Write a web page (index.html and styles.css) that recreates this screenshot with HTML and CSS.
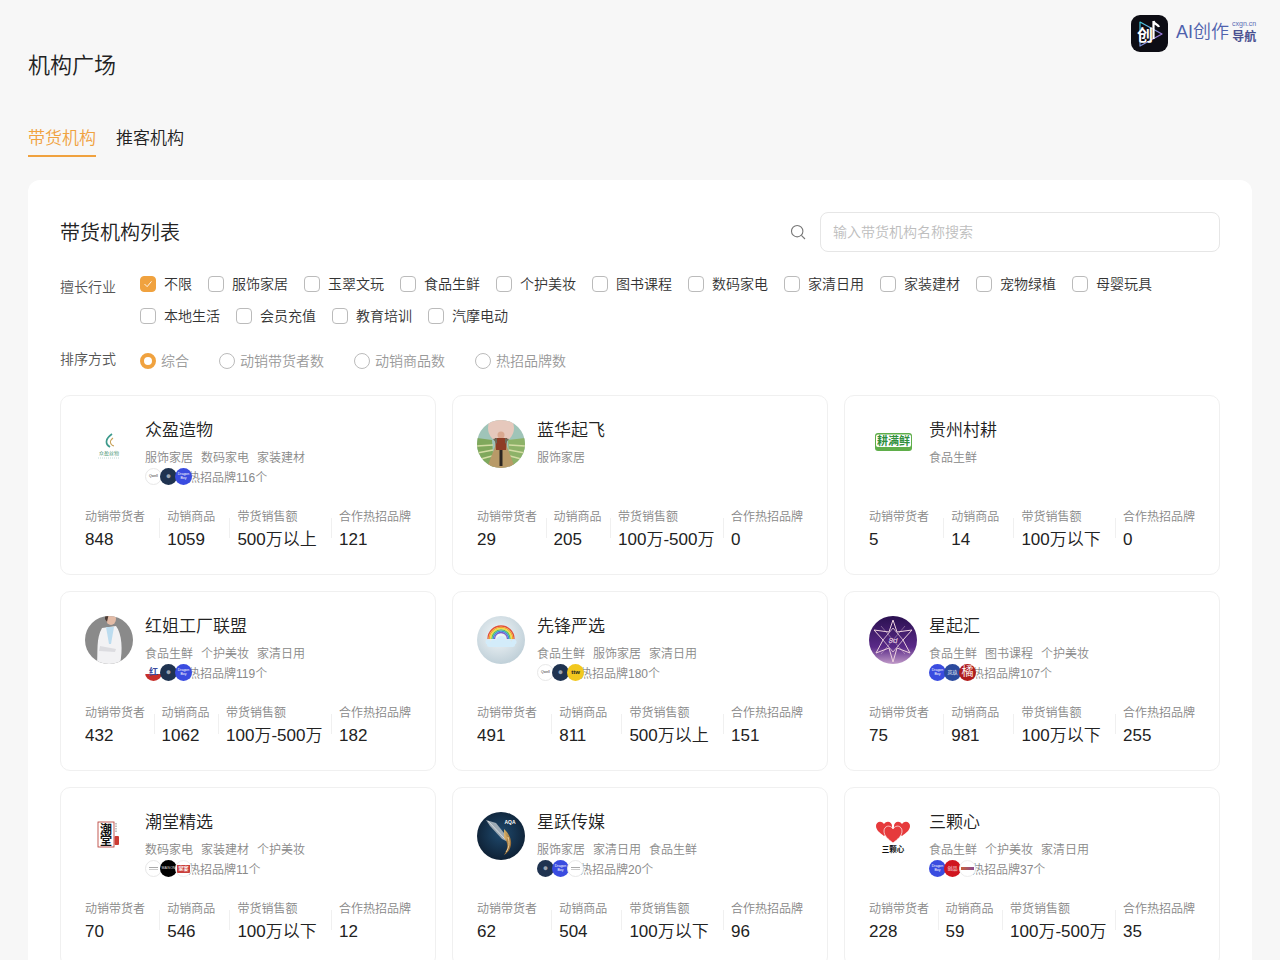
FILE: index.html
```html
<!DOCTYPE html>
<html lang="zh-CN">
<head>
<meta charset="UTF-8">
<meta name="viewport" content="width=device-width, initial-scale=1.0">
<title>机构广场</title>
<link rel="stylesheet" href="styles.css">
</head>
<body>
<div class="site-logo">
  <svg class="site-logo-icon" viewBox="0 0 37 37">
    <defs>
      <linearGradient id="playGrad" x1="0" y1="0" x2="1" y2="1">
        <stop offset="0" stop-color="#3fd0e0"/>
        <stop offset="1" stop-color="#c05fe0"/>
      </linearGradient>
    </defs>
    <rect width="37" height="37" rx="9" fill="#0d0d14"/>
    <path d="M9 7 L31 19 L9 31 Z" fill="none" stroke="url(#playGrad)" stroke-width="1.2" stroke-linejoin="round"/>
    <text x="6" y="26" class="site-logo-glyph">创</text>
    <path d="M22.500 6 V24 M22.500 6 C23.500 10 27 9 28 12" fill="none" stroke="#fff" stroke-width="2.200"/>
  </svg>
  <span class="site-logo-name">AI创作</span>
  <span class="site-logo-side">
    <span class="site-logo-domain">cxgn.cn</span>
    <span class="site-logo-nav">导航</span>
  </span>
</div>

<h1 class="page-title">机构广场</h1>

<div class="tabs">
  <div class="tab active">带货机构</div>
  <div class="tab">推客机构</div>
</div>

<div class="panel">
  <div class="panel-head">
    <h2 class="panel-title">带货机构列表</h2>
    <div class="search">
      <svg class="search-icon" viewBox="0 0 16 16"><circle cx="7.2" cy="7.2" r="5.7"/><path d="M11.4 11.4 L15 15"/></svg>
      <input class="search-input" type="text" placeholder="输入带货机构名称搜索">
    </div>
  </div>

  <div class="filter">
    <div class="filter-label">擅长行业</div>
    <div class="options">
      <label class="option"><span class="check checked"><svg viewBox="0 0 16 16"><path d="M4 8 L7 11 L12 5"/></svg></span>不限</label>
      <label class="option"><span class="check"></span>服饰家居</label>
      <label class="option"><span class="check"></span>玉翠文玩</label>
      <label class="option"><span class="check"></span>食品生鲜</label>
      <label class="option"><span class="check"></span>个护美妆</label>
      <label class="option"><span class="check"></span>图书课程</label>
      <label class="option"><span class="check"></span>数码家电</label>
      <label class="option"><span class="check"></span>家清日用</label>
      <label class="option"><span class="check"></span>家装建材</label>
      <label class="option"><span class="check"></span>宠物绿植</label>
      <label class="option"><span class="check"></span>母婴玩具</label>
      <label class="option"><span class="check"></span>本地生活</label>
      <label class="option"><span class="check"></span>会员充值</label>
      <label class="option"><span class="check"></span>教育培训</label>
      <label class="option"><span class="check"></span>汽摩电动</label>
    </div>
  </div>

  <div class="filter sort">
    <div class="filter-label">排序方式</div>
    <div class="radios">
      <label class="radio-item"><span class="radio checked"></span>综合</label>
      <label class="radio-item"><span class="radio"></span>动销带货者数</label>
      <label class="radio-item"><span class="radio"></span>动销商品数</label>
      <label class="radio-item"><span class="radio"></span>热招品牌数</label>
    </div>
  </div>

  <div class="card-grid">

    <div class="card">
      <div class="card-head">
        <div class="avatar">
          <svg viewBox="0 0 48 48">
            <rect width="48" height="48" fill="#fff"/>
            <path d="M27 14 C20 19 20 24 25 27" fill="none" stroke="#3d9a8c" stroke-width="1.700"/>
            <path d="M28 18 C24 21 25 25 29 26" fill="none" stroke="#c9a25a" stroke-width="1.100"/>
            <text x="24" y="35" class="av-tiny av-green">众盈丝物</text>
            <path d="M13 38 H35" stroke="#7cb5a8" stroke-width=".5" stroke-dasharray="1 1"/>
          </svg>
        </div>
        <div class="card-info">
          <div class="card-name">众盈造物</div>
          <div class="card-tags"><span>服饰家居</span><span>数码家电</span><span>家装建材</span></div>
          <div class="card-brands">
            <div class="brand-icons"><span class="brand b-white">Qwell</span><span class="brand b-navy">●</span><span class="brand b-blue">Dragon<br>Boy</span></div>
            <span class="brand-count">热招品牌116个</span>
          </div>
        </div>
      </div>
      <div class="stats">
        <div class="stat"><div class="stat-label">动销带货者</div><div class="stat-value">848</div></div>
        <div class="stat"><div class="stat-label">动销商品</div><div class="stat-value">1059</div></div>
        <div class="stat"><div class="stat-label">带货销售额</div><div class="stat-value">500万以上</div></div>
        <div class="stat"><div class="stat-label">合作热招品牌</div><div class="stat-value">121</div></div>
      </div>
    </div>

    <div class="card">
      <div class="card-head">
        <div class="avatar">
          <svg viewBox="0 0 48 48">
            <rect width="48" height="48" fill="#9fc4b8"/>
            <path d="M0 18 L15 20 L17 48 H0 Z" fill="#7fa85c"/>
            <path d="M48 18 L31 20 L33 48 H48 Z" fill="#8db268"/>
            <path d="M0 26 L16 25 M0 33 L16 30 M0 40 L15 36 M48 26 L32 25 M48 33 L32 30 M48 40 L33 36" stroke="#d3dca4" stroke-width="1.300"/>
            <path d="M19 24 H29 L38 48 H10 Z" fill="#b89a68"/>
            <ellipse cx="24" cy="8" rx="13" ry="14" fill="#e6c8bc"/>
            <circle cx="24" cy="15" r="3.500" fill="#d9a890"/>
            <path d="M18 18 H30 L29 30 H19 Z" fill="#8e3d26"/>
            <path d="M16 19 L20 18 L20 24 Z M32 19 L28 18 L28 24 Z" fill="#6e6a58"/>
            <path d="M22.500 30 H25.500 L25.500 46 H22.500 Z" fill="#2b2622"/>
          </svg>
        </div>
        <div class="card-info">
          <div class="card-name">蓝华起飞</div>
          <div class="card-tags"><span>服饰家居</span></div>
        </div>
      </div>
      <div class="stats">
        <div class="stat"><div class="stat-label">动销带货者</div><div class="stat-value">29</div></div>
        <div class="stat"><div class="stat-label">动销商品</div><div class="stat-value">205</div></div>
        <div class="stat"><div class="stat-label">带货销售额</div><div class="stat-value">100万-500万</div></div>
        <div class="stat"><div class="stat-label">合作热招品牌</div><div class="stat-value">0</div></div>
      </div>
    </div>

    <div class="card">
      <div class="card-head">
        <div class="avatar">
          <svg viewBox="0 0 48 48">
            <rect width="48" height="48" fill="#fff"/>
            <rect x="6" y="13" width="37" height="18" rx="3" fill="#5fae4a"/>
            <rect x="7" y="14.500" width="35" height="12.500" rx="2" fill="#fff"/>
            <text x="24.5" y="25" class="av-fresh">耕满鲜</text>
          </svg>
        </div>
        <div class="card-info">
          <div class="card-name">贵州村耕</div>
          <div class="card-tags"><span>食品生鲜</span></div>
        </div>
      </div>
      <div class="stats">
        <div class="stat"><div class="stat-label">动销带货者</div><div class="stat-value">5</div></div>
        <div class="stat"><div class="stat-label">动销商品</div><div class="stat-value">14</div></div>
        <div class="stat"><div class="stat-label">带货销售额</div><div class="stat-value">100万以下</div></div>
        <div class="stat"><div class="stat-label">合作热招品牌</div><div class="stat-value">0</div></div>
      </div>
    </div>

    <div class="card">
      <div class="card-head">
        <div class="avatar">
          <svg viewBox="0 0 48 48">
            <rect width="48" height="48" fill="#8a8a8a"/>
            <path d="M17 12 L31 10 C37 18 38 34 35 48 H12 C13 36 11 22 17 12 Z" fill="#f2f2f4"/>
            <path d="M21 11 H29 L26 28 H24 Z" fill="#bcdcef"/>
            <path d="M15 30 L31 33 L30 36 L14 35 Z" fill="#dcdce0"/>
            <ellipse cx="26" cy="3" rx="5" ry="6" fill="#e3bba6"/>
            <path d="M20 3 C20 -2 22 -3 24 -3 L22 6 Z" fill="#4a3a34"/>
          </svg>
        </div>
        <div class="card-info">
          <div class="card-name">红姐工厂联盟</div>
          <div class="card-tags"><span>食品生鲜</span><span>个护美妆</span><span>家清日用</span></div>
          <div class="card-brands">
            <div class="brand-icons"><span class="brand b-mix">红</span><span class="brand b-navy">●</span><span class="brand b-blue">Dragon<br>Boy</span></div>
            <span class="brand-count">热招品牌119个</span>
          </div>
        </div>
      </div>
      <div class="stats">
        <div class="stat"><div class="stat-label">动销带货者</div><div class="stat-value">432</div></div>
        <div class="stat"><div class="stat-label">动销商品</div><div class="stat-value">1062</div></div>
        <div class="stat"><div class="stat-label">带货销售额</div><div class="stat-value">100万-500万</div></div>
        <div class="stat"><div class="stat-label">合作热招品牌</div><div class="stat-value">182</div></div>
      </div>
    </div>

    <div class="card">
      <div class="card-head">
        <div class="avatar">
          <svg viewBox="0 0 48 48">
            <defs>
              <radialGradient id="skyGrad" cx=".45" cy=".4" r=".65">
                <stop offset="0" stop-color="#f4f8fa"/>
                <stop offset="1" stop-color="#bccdd6"/>
              </radialGradient>
            </defs>
            <rect width="48" height="48" fill="url(#skyGrad)"/>
            <g fill="none" stroke-width="1.300">
              <path d="M11 23 A13 13 0 0 1 37 23" stroke="#e4503a"/>
              <path d="M12.300 23 A11.700 11.700 0 0 1 35.700 23" stroke="#f2a02c"/>
              <path d="M13.600 23 A10.400 10.400 0 0 1 34.400 23" stroke="#f3dc3c"/>
              <path d="M14.900 23 A9.100 9.100 0 0 1 33.100 23" stroke="#5cc35a"/>
              <path d="M16.200 23 A7.800 7.800 0 0 1 31.800 23" stroke="#3a96dc"/>
              <path d="M17.500 23 A6.500 6.500 0 0 1 30.500 23" stroke="#7a5cc8"/>
            </g>
            <g fill="#d3ecfa">
              <circle cx="24" cy="25" r="5"/>
              <circle cx="17" cy="27" r="3.500"/>
              <circle cx="31" cy="27" r="3.500"/>
              <circle cx="11" cy="26" r="2.500"/>
              <circle cx="37" cy="26" r="2.500"/>
              <rect x="10" y="26" width="28" height="5" rx="2.500"/>
            </g>
          </svg>
        </div>
        <div class="card-info">
          <div class="card-name">先锋严选</div>
          <div class="card-tags"><span>食品生鲜</span><span>服饰家居</span><span>家清日用</span></div>
          <div class="card-brands">
            <div class="brand-icons"><span class="brand b-white">Qwell</span><span class="brand b-navy">●</span><span class="brand b-yellow">ttw</span></div>
            <span class="brand-count">热招品牌180个</span>
          </div>
        </div>
      </div>
      <div class="stats">
        <div class="stat"><div class="stat-label">动销带货者</div><div class="stat-value">491</div></div>
        <div class="stat"><div class="stat-label">动销商品</div><div class="stat-value">811</div></div>
        <div class="stat"><div class="stat-label">带货销售额</div><div class="stat-value">500万以上</div></div>
        <div class="stat"><div class="stat-label">合作热招品牌</div><div class="stat-value">151</div></div>
      </div>
    </div>

    <div class="card">
      <div class="card-head">
        <div class="avatar">
          <svg viewBox="0 0 48 48">
            <defs>
              <linearGradient id="starGrad" x1="0" y1="0" x2="0" y2="1">
                <stop offset="0" stop-color="#2a1050"/>
                <stop offset=".65" stop-color="#5a2a88"/>
                <stop offset="1" stop-color="#c09ac8"/>
              </linearGradient>
            </defs>
            <rect width="48" height="48" fill="url(#starGrad)"/>
            <path d="M24 4 L28 16 L43 14 L34 24 L41 37 L28 32 L24 46 L20 32 L7 37 L14 24 L5 14 L20 16 Z" fill="none" stroke="#eed3de" stroke-width="1"/>
            <path d="M24 12 L34 24 L24 36 L14 24 Z" fill="none" stroke="#eed3de" stroke-width=".8"/>
            <path d="M12 10 L36 38 M36 10 L12 38" stroke="#eed3de" stroke-width=".4"/>
            <text x="24" y="27" class="av-star">8d</text>
          </svg>
        </div>
        <div class="card-info">
          <div class="card-name">星起汇</div>
          <div class="card-tags"><span>食品生鲜</span><span>图书课程</span><span>个护美妆</span></div>
          <div class="card-brands">
            <div class="brand-icons"><span class="brand b-blue">Dragon<br>Boy</span><span class="brand b-indigo">岚玖</span><span class="brand b-red">橘</span></div>
            <span class="brand-count">热招品牌107个</span>
          </div>
        </div>
      </div>
      <div class="stats">
        <div class="stat"><div class="stat-label">动销带货者</div><div class="stat-value">75</div></div>
        <div class="stat"><div class="stat-label">动销商品</div><div class="stat-value">981</div></div>
        <div class="stat"><div class="stat-label">带货销售额</div><div class="stat-value">100万以下</div></div>
        <div class="stat"><div class="stat-label">合作热招品牌</div><div class="stat-value">255</div></div>
      </div>
    </div>

    <div class="card">
      <div class="card-head">
        <div class="avatar">
          <svg viewBox="0 0 48 48">
            <rect width="48" height="48" fill="#fff"/>
            <rect x="13" y="10" width="16" height="25" fill="none" stroke="#b5342c" stroke-width=".8"/>
            <text x="21" y="21.500" class="av-chao">潮</text>
            <text x="21" y="33" class="av-chao">堂</text>
            <rect x="29.500" y="24" width="4.500" height="9" rx="1" fill="#cc3b33"/>
            <path d="M31 11 V21" stroke="#c4c4c4" stroke-width="2" stroke-dasharray="1.500 1"/>
          </svg>
        </div>
        <div class="card-info">
          <div class="card-name">潮堂精选</div>
          <div class="card-tags"><span>数码家电</span><span>家装建材</span><span>个护美妆</span></div>
          <div class="card-brands">
            <div class="brand-icons"><span class="brand b-lines"></span><span class="brand b-black">MAISON</span><span class="brand b-stamp">家宴</span></div>
            <span class="brand-count">热招品牌11个</span>
          </div>
        </div>
      </div>
      <div class="stats">
        <div class="stat"><div class="stat-label">动销带货者</div><div class="stat-value">70</div></div>
        <div class="stat"><div class="stat-label">动销商品</div><div class="stat-value">546</div></div>
        <div class="stat"><div class="stat-label">带货销售额</div><div class="stat-value">100万以下</div></div>
        <div class="stat"><div class="stat-label">合作热招品牌</div><div class="stat-value">12</div></div>
      </div>
    </div>

    <div class="card">
      <div class="card-head">
        <div class="avatar">
          <svg viewBox="0 0 48 48">
            <defs>
              <radialGradient id="nightGrad" cx=".5" cy=".45" r=".7">
                <stop offset="0" stop-color="#1f4a6e"/>
                <stop offset="1" stop-color="#0a1626"/>
              </radialGradient>
              <linearGradient id="tailGrad" x1="0" y1="0" x2="1" y2="1">
                <stop offset="0" stop-color="#f4c36a"/>
                <stop offset="1" stop-color="#9a5f20"/>
              </linearGradient>
            </defs>
            <rect width="48" height="48" fill="url(#nightGrad)"/>
            <path d="M9 8 L19 11 L31 26 L29 29 L25 27 L13 14 Z" fill="#9eabb5"/>
            <path d="M11 9 L28 27" stroke="#eef1f3" stroke-width=".7"/>
            <path d="M27 17 C37 26 36 38 27 43 C31 37 32 31 27 26 Z" fill="url(#tailGrad)" opacity=".85"/>
            <path d="M31 25 C33 31 32 36 29 40" stroke="#ffe6b0" stroke-width=".8" fill="none"/>
            <text x="33" y="12" class="av-tiny av-white">AQA</text>
          </svg>
        </div>
        <div class="card-info">
          <div class="card-name">星跃传媒</div>
          <div class="card-tags"><span>服饰家居</span><span>家清日用</span><span>食品生鲜</span></div>
          <div class="card-brands">
            <div class="brand-icons"><span class="brand b-navy">●</span><span class="brand b-blue">Dragon<br>Boy</span><span class="brand b-lines"></span></div>
            <span class="brand-count">热招品牌20个</span>
          </div>
        </div>
      </div>
      <div class="stats">
        <div class="stat"><div class="stat-label">动销带货者</div><div class="stat-value">62</div></div>
        <div class="stat"><div class="stat-label">动销商品</div><div class="stat-value">504</div></div>
        <div class="stat"><div class="stat-label">带货销售额</div><div class="stat-value">100万以下</div></div>
        <div class="stat"><div class="stat-label">合作热招品牌</div><div class="stat-value">96</div></div>
      </div>
    </div>

    <div class="card">
      <div class="card-head">
        <div class="avatar">
          <svg viewBox="0 0 48 48">
            <rect width="48" height="48" fill="#fff"/>
            <path d="M15 24 C11 21 7 18 7 14 C7 10 12 8 15 12 C18 8 23 10 23 14 C23 18 19 21 15 24 Z" fill="#e63a3c"/>
            <path d="M33 24 C29 21 25 18 25 14 C25 10 30 8 33 12 C36 8 41 10 41 14 C41 18 37 21 33 24 Z" fill="#e63a3c"/>
            <path d="M24 31 C19 27 15 24 15 19 C15 14 21 12 24 17 C27 12 33 14 33 19 C33 24 29 27 24 31 Z" fill="#e63a3c" stroke="#fff" stroke-width=".7"/>
            <text x="24" y="39.500" class="av-heart">三颗心</text>
          </svg>
        </div>
        <div class="card-info">
          <div class="card-name">三颗心</div>
          <div class="card-tags"><span>食品生鲜</span><span>个护美妆</span><span>家清日用</span></div>
          <div class="card-brands">
            <div class="brand-icons"><span class="brand b-blue">Dragon<br>Boy</span><span class="brand b-crimson">创品</span><span class="brand b-bar"></span></div>
            <span class="brand-count">热招品牌37个</span>
          </div>
        </div>
      </div>
      <div class="stats">
        <div class="stat"><div class="stat-label">动销带货者</div><div class="stat-value">228</div></div>
        <div class="stat"><div class="stat-label">动销商品</div><div class="stat-value">59</div></div>
        <div class="stat"><div class="stat-label">带货销售额</div><div class="stat-value">100万-500万</div></div>
        <div class="stat"><div class="stat-label">合作热招品牌</div><div class="stat-value">35</div></div>
      </div>
    </div>

  </div>
</div>
</body>
</html>
```

FILE: styles.css
```css
* {
  box-sizing: border-box;
}
html, body {
  height: 100%;
}
body {
  margin: 0;
  padding: 51px 28px 0;
  overflow: hidden;
  background: #f7f7f7;
  color: #222;
  font-family: "Liberation Sans", "Noto Sans CJK SC", sans-serif;
  font-weight: 350;
}
h1, h2 {
  margin: 0;
  font-weight: 350;
}

/* site logo, floats over the page corner */
.site-logo {
  position: absolute;
  top: 15px;
  left: 1131px;
  display: flex;
  align-items: center;
  gap: 8px;
}
.site-logo-icon {
  width: 37px;
  height: 37px;
}
.site-logo-glyph {
  font-size: 16px;
  font-weight: 700;
  fill: #fff;
}
.site-logo-name {
  font-size: 18px;
  line-height: 30px;
  color: #4f62ad;
  margin-top: -4px;
}
.site-logo-side {
  display: flex;
  flex-direction: column;
  align-items: flex-end;
  margin-left: -5px;
  margin-top: -4px;
}
.site-logo-domain {
  font-size: 7px;
  line-height: 8px;
  color: #5a6bb5;
}
.site-logo-nav {
  margin-top: 3px;
  font-size: 12px;
  line-height: 13px;
  font-weight: 700;
  color: #4a5090;
}

.page-title {
  font-size: 22px;
  line-height: 30px;
}

.tabs {
  display: flex;
  gap: 20px;
  margin-top: 46px;
}
.tab {
  font-size: 17px;
  line-height: 24px;
  padding-bottom: 4px;
  border-bottom: 2px solid transparent;
}
.tab.active {
  color: #f0a23f;
  border-bottom-color: #f0a23f;
}

.panel {
  margin-top: 23px;
  padding: 32px;
  background: #fff;
  border-radius: 12px;
}
.panel-head {
  display: flex;
  align-items: center;
  justify-content: space-between;
}
.panel-title {
  padding-top: 2px;
  font-size: 20px;
  line-height: 28px;
}
.search {
  display: flex;
  align-items: center;
  gap: 14px;
}
.search-icon {
  width: 16px;
  height: 16px;
  fill: none;
  stroke: #777;
  stroke-width: 1.1;
}
.search-input {
  width: 400px;
  height: 40px;
  padding: 0 12px;
  border: 1px solid #e6e6e6;
  border-radius: 8px;
  outline: none;
  font-family: inherit;
  font-size: 14px;
  font-weight: 350;
}
.search-input::placeholder {
  color: #bdbdbd;
}

.filter {
  display: flex;
  margin-top: 22px;
}
.filter-label {
  flex: none;
  width: 80px;
  padding-top: 3px;
  font-size: 14px;
  line-height: 20px;
  color: #555;
}
.options {
  display: flex;
  flex-wrap: wrap;
  gap: 12px 16px;
}
.option {
  display: flex;
  align-items: center;
  gap: 8px;
  font-size: 14px;
  line-height: 20px;
  color: #333;
}
.check {
  width: 16px;
  height: 16px;
  border: 1px solid #bbb;
  border-radius: 4px;
  background: #fff;
}
.check.checked {
  border-color: #f0a23f;
  background: #f0a23f;
}
.check svg {
  display: block;
  width: 14px;
  height: 14px;
  fill: none;
  stroke: #fff;
  stroke-width: 1;
}

.sort {
  margin-top: 23px;
}
.sort .filter-label {
  padding-top: 0;
}
.radios {
  display: flex;
  gap: 30px;
  padding-top: 2px;
}
.radio-item {
  display: flex;
  align-items: center;
  gap: 5px;
  font-size: 14px;
  line-height: 20px;
  color: #999;
}
.radio {
  width: 16px;
  height: 16px;
  border: 1px solid #bbb;
  border-radius: 50%;
  background: #fff;
}
.radio.checked {
  border: 4px solid #f0a23f;
}

.card-grid {
  display: grid;
  grid-template-columns: repeat(3, 1fr);
  gap: 16.200px 16px;
  margin-top: 24px;
}
.card {
  padding: 24px 24px 23px;
  border: 1px solid #f0f0f0;
  border-radius: 10px;
  background: #fff;
}
.card-head {
  display: flex;
  gap: 12px;
  height: 68px;
}
.avatar {
  flex: none;
  width: 48px;
  height: 48px;
  border-radius: 50%;
  overflow: hidden;
}
.avatar svg {
  display: block;
  width: 48px;
  height: 48px;
}
.card-name {
  padding-top: 1px;
  font-size: 17px;
  line-height: 20px;
}
.card-tags {
  display: flex;
  gap: 8px;
  margin-top: 9px;
  font-size: 12px;
  line-height: 17px;
  color: #888;
}
.card-brands {
  display: flex;
  align-items: center;
  margin-top: 1px;
  height: 17px;
}
.brand-icons {
  display: flex;
  position: relative;
  z-index: 1;
}
.brand {
  display: flex;
  align-items: center;
  justify-content: center;
  flex: none;
  width: 17px;
  height: 17px;
  margin-left: -2px;
  border-radius: 50%;
  overflow: hidden;
  font-size: 3.500px;
  line-height: 3.500px;
  text-align: center;
}
.brand:first-child {
  margin-left: 0;
}
.brand-count {
  margin-left: -4px;
  font-size: 12px;
  color: #888;
}
.b-white {
  background: #fff;
  border: 1px solid #e8e8e8;
  color: #333;
}
.b-lines {
  background: #fff linear-gradient(transparent 40%, #aaa 40%, #aaa 48%, transparent 48%, transparent 54%, #ccc 54%, #ccc 60%, transparent 60%) center / 9px 100% no-repeat;
  border: 1px solid #e8e8e8;
}
.b-navy {
  background: #1f3350;
  color: #9aa4b0;
  font-size: 9px;
}
.b-blue {
  background: #3a4ce0;
  color: #fff;
}
.b-yellow {
  background: #f2c81e;
  color: #222;
  font-size: 6px;
  font-weight: 700;
}
.b-mix {
  background: linear-gradient(#fff 60%, #c62f2a 60%);
  color: #3a4a9e;
  font-size: 9px;
  font-weight: 700;
}
.b-indigo {
  background: #2b4a9e;
  color: #fff;
  font-size: 5px;
}
.b-red {
  background: #b01c1c;
  color: #fff;
  font-size: 12px;
}
.b-black {
  background: #000;
  color: #ddd;
}
.b-stamp {
  background: #fff linear-gradient(#c9403c, #c9403c) center / 13px 8px no-repeat;
  border: 1px solid #eee;
  color: #fff;
  font-size: 5px;
  font-weight: 700;
}
.b-crimson {
  background: #d0151f;
  color: #fff;
  font-size: 5px;
}
.b-bar {
  background: #fff linear-gradient(90deg, #c8603a, #8a4a90) center / 13px 3px no-repeat;
  border: 1px solid #eee;
}

.stats {
  display: flex;
  justify-content: space-between;
  margin-top: 20px;
}
.stat {
  position: relative;
}
.stat + .stat::before {
  content: "";
  position: absolute;
  top: 10px;
  left: -8px;
  height: 20px;
  border-left: 1px solid #f0f0f0;
}
.stat-label {
  font-size: 12px;
  line-height: 18px;
  color: #888;
}
.stat-value {
  margin-top: 3px;
  font-size: 17px;
  line-height: 22px;
  white-space: nowrap;
}

/* text inside the drawn avatars */
.av-tiny {
  font-size: 5px;
  text-anchor: middle;
}
.av-green {
  fill: #3d8f6c;
}
.av-white {
  fill: #fff;
  font-weight: 700;
}
.av-fresh {
  font-size: 11px;
  font-weight: 700;
  fill: #2f8f3c;
  text-anchor: middle;
}
.av-star {
  font-size: 8px;
  font-style: italic;
  fill: #f3dce6;
  text-anchor: middle;
}
.av-chao {
  font-size: 12px;
  font-weight: 700;
  fill: #111;
  text-anchor: middle;
}
.av-heart {
  font-size: 7.500px;
  font-weight: 700;
  fill: #111;
  text-anchor: middle;
}
```
